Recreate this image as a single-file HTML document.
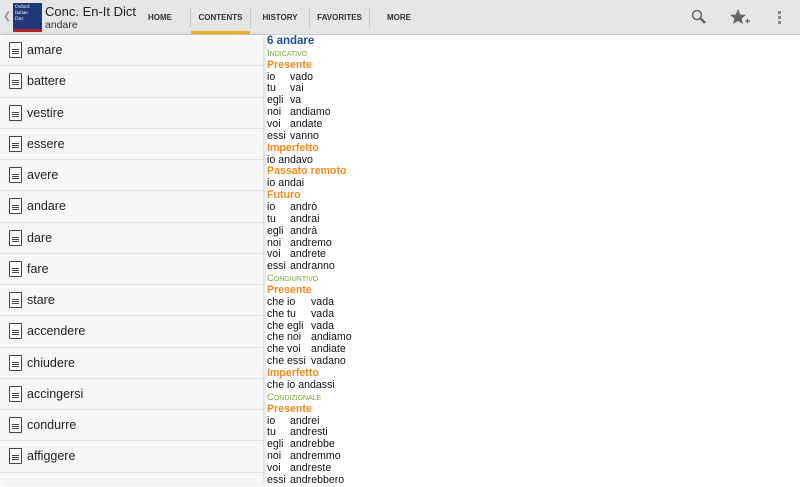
<html><head><style>
body{margin:0;width:800px;height:484px;overflow:hidden;background:#fff;font-family:"Liberation Sans",sans-serif;position:relative}
.hdr{position:absolute;left:0;top:0;width:800px;height:34px;background:#e6e6e6;border-bottom:1px solid #cfcfcf}
.tab{position:absolute;top:0;height:34px;line-height:35px;font-size:8px;font-weight:bold;color:#333;text-align:center}
.sep{position:absolute;top:8px;width:1px;height:20px;background:#c8c8c8}
.left{position:absolute;left:0;top:35px;width:263px;height:449px;background:#f7f7f7;box-shadow:2px 0 4px rgba(0,0,0,.15)}
.row{height:30.25px;border-bottom:1px solid #e2e2e2;position:relative;font-size:12.5px;color:#222}
.row span{position:absolute;left:27px;top:8px}
.ic{position:absolute;left:9px;top:7px;width:11px;height:14px;border:1.5px solid #444;border-radius:1px;background:#fff}
.ic:before{content:"";position:absolute;left:2px;top:6px;width:7px;height:1px;background:#444;box-shadow:0 2px 0 #444,0 4px 0 #444}
.right{position:absolute;left:267px;top:35px;font-size:10.6px;line-height:11.86px;color:#111}
.r{white-space:pre;height:11.86px;position:relative}
.b{color:#1d4f8f;font-weight:bold;font-size:11.5px}
.g{color:#7ea43b;font-variant:small-caps;font-size:9.5px}
.o{color:#f28a1e;font-weight:bold}
.c2{position:absolute;left:23px}.c3{position:absolute;left:44px}
</style></head><body>
<div class="hdr">
<div style="position:absolute;left:3px;top:11px;color:#999;font-size:10px">&#10094;</div>
<div style="position:absolute;left:13px;top:3px;width:29px;height:29px;background:#1e3a78;border-bottom:3px solid #b8202a;box-sizing:border-box;color:#fff;font-size:5px;line-height:6px;font-family:'Liberation Serif',serif;padding:2px">Oxford<br>Italian<br>Dict</div>
<div style="position:absolute;left:45px;top:4px;font-size:13px;color:#222">Conc. En-It Dict</div>
<div style="position:absolute;left:45px;top:19px;font-size:10.5px;color:#333">andare</div>
<div class="tab" style="left:135px;width:50px">HOME</div>
<div class="sep" style="left:190px"></div>
<div class="tab" style="left:191px;width:59px">CONTENTS</div>
<div style="position:absolute;left:191px;top:31px;width:59px;height:3px;background:#f5b324"></div>
<div class="sep" style="left:250px"></div>
<div class="tab" style="left:251px;width:58px">HISTORY</div>
<div class="sep" style="left:309px"></div>
<div class="tab" style="left:310px;width:59px">FAVORITES</div>
<div class="sep" style="left:369px"></div>
<div class="tab" style="left:370px;width:58px">MORE</div>
<svg style="position:absolute;left:690px;top:8px" width="18" height="18"><circle cx="7" cy="7" r="4.5" fill="none" stroke="#666" stroke-width="1.5"/><line x1="10" y1="10" x2="15" y2="15" stroke="#666" stroke-width="2.5"/></svg>
<svg style="position:absolute;left:729px;top:8px" width="22" height="18"><path d="M9 1 L11.3 6.5 L17 6.9 L12.6 10.5 L14 16 L9 13 L4 16 L5.4 10.5 L1 6.9 L6.7 6.5Z" fill="#666"/><path d="M16 13h5M18.5 10.5v5" stroke="#666" stroke-width="1.2"/></svg>
<div style="position:absolute;left:778px;top:11px;width:3px;height:3px;background:#888;box-shadow:0 5px 0 #888,0 10px 0 #888"></div>
</div>
<div class="left">
<div class="row"><div class="ic"></div><span>amare</span></div>
<div class="row"><div class="ic"></div><span>battere</span></div>
<div class="row"><div class="ic"></div><span>vestire</span></div>
<div class="row"><div class="ic"></div><span>essere</span></div>
<div class="row"><div class="ic"></div><span>avere</span></div>
<div class="row"><div class="ic"></div><span>andare</span></div>
<div class="row"><div class="ic"></div><span>dare</span></div>
<div class="row"><div class="ic"></div><span>fare</span></div>
<div class="row"><div class="ic"></div><span>stare</span></div>
<div class="row"><div class="ic"></div><span>accendere</span></div>
<div class="row"><div class="ic"></div><span>chiudere</span></div>
<div class="row"><div class="ic"></div><span>accingersi</span></div>
<div class="row"><div class="ic"></div><span>condurre</span></div>
<div class="row"><div class="ic"></div><span>affiggere</span></div>
</div>
<div class="right" style="top:36px">
<div class="r b">6 andare</div>
<div class="r g">Indicativo</div>
<div class="r o">Presente</div>
<div class="r">io<span class="c2">vado</span></div>
<div class="r">tu<span class="c2">vai</span></div>
<div class="r">egli<span class="c2">va</span></div>
<div class="r">noi<span class="c2">andiamo</span></div>
<div class="r">voi<span class="c2">andate</span></div>
<div class="r">essi<span class="c2">vanno</span></div>
<div class="r o">Imperfetto</div>
<div class="r">io andavo</div>
<div class="r o">Passato remoto</div>
<div class="r">io andai</div>
<div class="r o">Futuro</div>
<div class="r">io<span class="c2">andrò</span></div>
<div class="r">tu<span class="c2">andrai</span></div>
<div class="r">egli<span class="c2">andrà</span></div>
<div class="r">noi<span class="c2">andremo</span></div>
<div class="r">voi<span class="c2">andrete</span></div>
<div class="r">essi<span class="c2">andranno</span></div>
<div class="r g">Congiuntivo</div>
<div class="r o">Presente</div>
<div class="r">che io<span class="c3">vada</span></div>
<div class="r">che tu<span class="c3">vada</span></div>
<div class="r">che egli<span class="c3">vada</span></div>
<div class="r">che noi<span class="c3">andiamo</span></div>
<div class="r">che voi<span class="c3">andiate</span></div>
<div class="r">che essi<span class="c3">vadano</span></div>
<div class="r o">Imperfetto</div>
<div class="r">che io andassi</div>
<div class="r g">Condizionale</div>
<div class="r o">Presente</div>
<div class="r">io<span class="c2">andrei</span></div>
<div class="r">tu<span class="c2">andresti</span></div>
<div class="r">egli<span class="c2">andrebbe</span></div>
<div class="r">noi<span class="c2">andremmo</span></div>
<div class="r">voi<span class="c2">andreste</span></div>
<div class="r">essi<span class="c2">andrebbero</span></div>
</div>
</body></html>
